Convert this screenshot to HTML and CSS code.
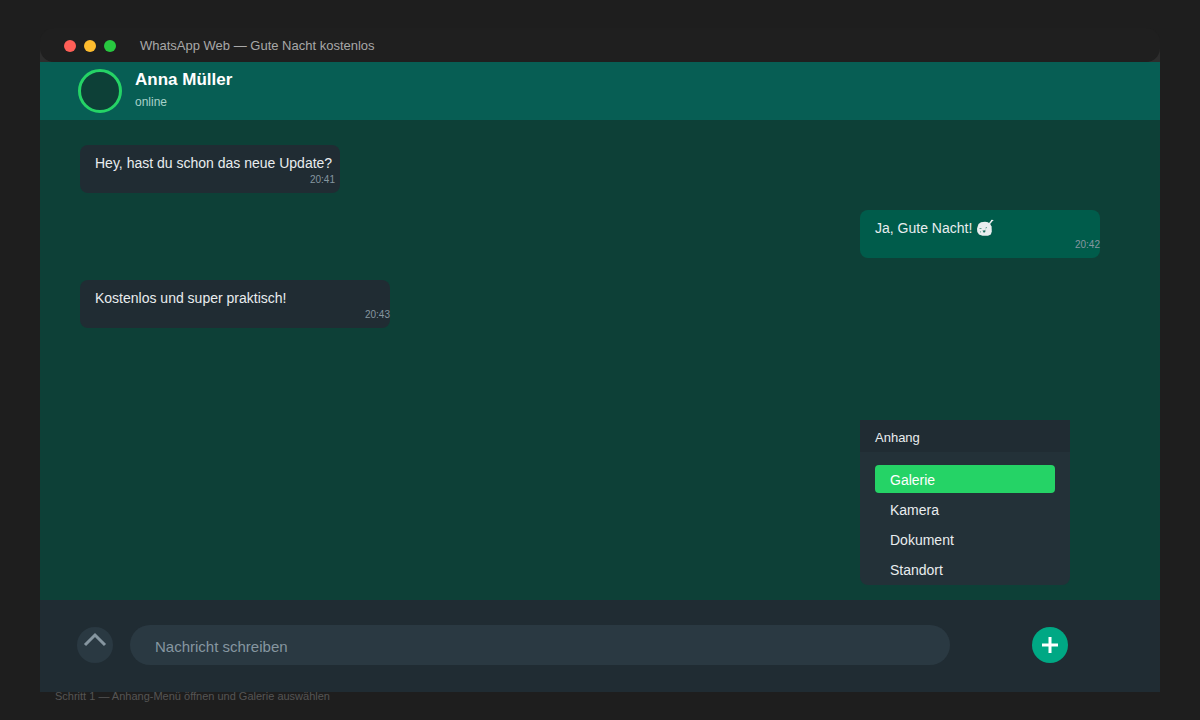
FILE: index.html
```html
<!DOCTYPE html>
<html lang="de">
<head>
<meta charset="utf-8">
<title>WhatsApp Web — Gute Nacht kostenlos</title>
<link rel="stylesheet" href="styles.css">
</head>
<body>
<main class="window">
  <div class="titlebar">
    <div class="titlebar-inner">
      <span class="dot dot-close"></span>
      <span class="dot dot-min"></span>
      <span class="dot dot-max"></span>
      <span class="window-title">WhatsApp Web — Gute Nacht kostenlos</span>
    </div>
  </div>
  <header class="contact">
    <div class="avatar"></div>
    <div class="contact-info">
      <h1 class="contact-name">Anna Müller</h1>
      <p class="contact-status">online</p>
    </div>
  </header>
  <section class="chat">
    <article class="bubble bubble-first">
      <p class="message">Hey, hast du schon das neue Update?</p>
      <time class="time time-inset">20:41</time>
    </article>
    <article class="bubble bubble-out">
      <p class="message">Ja, Gute Nacht! <svg class="emoji" viewBox="0 0 18 18" role="img" aria-label="schlafend"><path d="M2.500 5 5 3.300 9 2.800 12 3.200 14.200 5.300 15.600 7.500 15.800 12.500 14.800 15.500 12 16.800 6.500 16.800 3 15.500 1.300 13 1 9.500Z" fill="#e9edef"/><path d="M13.200 5 16.500 1" stroke="#e9edef" stroke-width="1.400"/><path d="M15 1.500h2.300" fill="none" stroke="#e9edef"/><path d="M3.500 9.500h2M9.500 9l1.500-.5M4 12.500l1 .8" stroke="#5f9e8e"/><path d="M6.500 11.500h2l.8-1V13l-1.500.8Z" fill="#1b6d5d"/></svg></p>
      <time class="time">20:42</time>
    </article>
    <article class="bubble bubble-last">
      <p class="message">Kostenlos und super praktisch!</p>
      <time class="time">20:43</time>
    </article>
    <aside class="menu">
      <h2 class="menu-title">Anhang</h2>
      <div class="menu-items">
        <button class="menu-item menu-item-active" type="button">Galerie</button>
        <button class="menu-item" type="button">Kamera</button>
        <button class="menu-item" type="button">Dokument</button>
        <button class="menu-item" type="button">Standort</button>
      </div>
    </aside>
  </section>
  <footer class="composer">
    <button class="round" type="button" aria-label="Nach oben"><svg class="icon" viewBox="0 0 36 36"><path d="M8 18 18 8l10 10" fill="none" stroke="#8696a0" stroke-width="3"/></svg></button>
    <input class="field" type="text" aria-label="Nachricht schreiben" placeholder="Nachricht schreiben">
    <button class="round round-add" type="button" aria-label="Anhang"><svg class="icon" viewBox="0 0 36 36"><path d="M18 10v16M10 18h16" stroke="#fff" stroke-width="3"/></svg></button>
  </footer>
</main>
<p class="caption">Schritt 1 — Anhang-Menü öffnen und Galerie auswählen</p>
</body>
</html>
```
FILE: styles.css
```css
* {
  box-sizing: border-box;
}

body {
  display: flex;
  flex-direction: column;
  min-height: 100vh;
  margin: 0;
  padding: 28px 40px 16px;
  background: #1e1e1e;
  font-family: "Liberation Sans", Arial, sans-serif;
}

h1, h2, p {
  margin: 0;
}

button, input {
  border: 0;
  padding: 0;
  font-family: inherit;
}

.window {
  flex: 1;
  display: flex;
  flex-direction: column;
}

.titlebar {
  background: linear-gradient(#1e1e1e 50%, #2d2d2d 50%);
}

.titlebar-inner {
  display: flex;
  align-items: center;
  gap: 8px;
  height: 34px;
  padding: 2px 24px 0;
  border-radius: 14px;
  background: #1f1f1f;
}

.dot {
  width: 12px;
  height: 12px;
  border-radius: 50%;
}

.dot-close { background: #ff5f57; }
.dot-min { background: #febc2e; }
.dot-max { background: #28c840; }

.window-title {
  margin-left: 16px;
  color: #a8a8a8;
  font-size: 13px;
  line-height: 16px;
}

.contact {
  display: flex;
  align-items: center;
  gap: 13px;
  height: 58px;
  padding: 0 38px;
  background: #075e54;
}

.avatar {
  width: 44px;
  height: 44px;
  border: 3px solid #25d366;
  border-radius: 50%;
  background: #0d4037;
}

.contact-info {
  padding-bottom: 4px;
}

.contact-name {
  color: #fff;
  font-size: 17px;
  line-height: 26px;
}

.contact-status {
  color: #a7d1c9;
  font-size: 12px;
  line-height: 18px;
}

.chat {
  position: relative;
  flex: 1;
  display: flex;
  flex-direction: column;
  align-items: flex-start;
  padding: 25px 60px 25px 40px;
  background: #0d4037;
}

.bubble {
  display: flex;
  flex-direction: column;
  gap: 1px;
  min-width: 240px;
  min-height: 48px;
  padding: 9px 0 5px 15px;
  border-radius: 8px;
  background: #202c33;
}

.bubble-first {
  min-width: 260px;
}

.bubble-out {
  align-self: flex-end;
  margin: 17px 0 22px;
  background: #005c4b;
}

.bubble-last {
  min-width: 310px;
}

.message {
  color: #e9edef;
  font-size: 14px;
  line-height: 18px;
}

.emoji {
  width: 18px;
  height: 18px;
  vertical-align: bottom;
}

.time {
  align-self: flex-end;
  color: #8696a0;
  font-size: 10px;
  line-height: 14px;
}

.time-inset {
  margin-right: 5px;
}

.menu {
  position: absolute;
  right: 90px;
  bottom: 15px;
  width: 210px;
  border-radius: 0 0 8px 8px;
  background: #233138;
}

.menu-title {
  padding: 10px 15px 6px;
  background: #202c33;
  color: #e9edef;
  font-size: 13px;
  font-weight: normal;
  line-height: 16px;
}

.menu-items {
  display: flex;
  flex-direction: column;
  gap: 2px;
  padding: 13px 15px 2px;
}

.menu-item {
  height: 28px;
  padding: 2px 15px 0;
  border-radius: 4px;
  background: transparent;
  color: #e9edef;
  font-size: 14px;
  text-align: left;
}

.menu-item-active {
  background: #25d366;
  color: #fff;
}

.composer {
  display: flex;
  align-items: center;
  padding: 25px 92px 27px 37px;
  background: #202c33;
}

.round {
  flex: none;
  width: 36px;
  height: 36px;
  border-radius: 50%;
  background: #2a3942;
}

.round-add {
  background: #00a884;
}

.icon {
  display: block;
  width: 100%;
  height: 100%;
}

.field {
  flex: 1;
  min-width: 0;
  height: 40px;
  margin: 0 82px 0 17px;
  padding: 2px 25px 0;
  border-radius: 20px;
  background: #2a3942;
  color: #e9edef;
  font-size: 15px;
}

.field::placeholder {
  color: #8696a0;
}

.caption {
  height: 12px;
  padding-left: 15px;
  color: #555;
  font-size: 11px;
  line-height: 9px;
}
```
